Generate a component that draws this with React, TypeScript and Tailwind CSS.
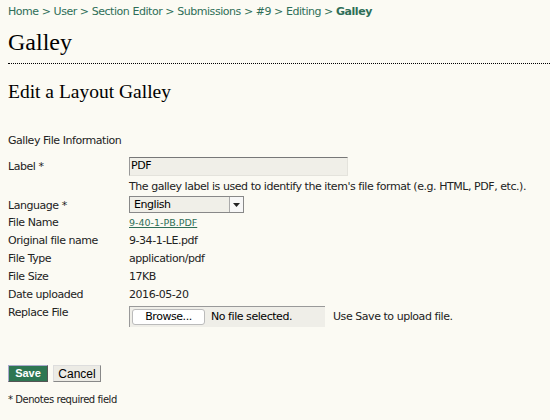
const Row = ({ label, children, pad = "py-[2px]", labelPad }: { label: string; children: React.ReactNode; pad?: string; labelPad?: string }) => (
  <tr>
    <td className={`w-[121px] align-top ${labelPad ?? pad}`}>{label}</td>
    <td className={`align-top ${pad}`}>{children}</td>
  </tr>
);

const App = () => {
  return (
    <div className="min-h-[420px] w-[550px] bg-[#fbfaf3] font-['DejaVu_Sans',sans-serif] text-[11px] tracking-[-0.45px] text-[#222] pl-2 pt-[5px] overflow-hidden">
      <div className="text-[#2e6e57] leading-[14px]">
        Home &gt; User &gt; Section Editor &gt; Submissions &gt; #9 &gt; Editing &gt; <span className="font-bold">Galley</span>
      </div>
      <h1 className="mt-[9px] font-['Liberation_Serif',serif] text-[24px] tracking-normal leading-[28px] text-black">Galley</h1>
      <div className="mt-[7px] border-b border-dotted border-black" />
      <h2 className="mt-[16px] font-['Liberation_Serif',serif] text-[19.5px] tracking-normal leading-[24px] text-black">Edit a Layout Galley</h2>
      <div className="mt-[30px] leading-[14px]">Galley File Information</div>
      <table className="mt-[6px] border-collapse leading-[14px]">
        <tbody>
          <Row label="Label *" pad="pt-[3px] pb-0" labelPad="pt-[6px] pb-0">
            <div className="w-[219px] h-[19px] bg-[#f0efe8] border border-[#e4e3dc] border-t-[#777] border-l-[#999] px-[1px] leading-[16px] text-[11px] text-black">
              PDF
            </div>
            <div className="mt-[4px] whitespace-nowrap">The galley label is used to identify the item's file format (e.g. HTML, PDF, etc.).</div>
          </Row>
          <Row label="Language *" pad="pt-[5px] pb-[1px]">
            <div className="relative -mt-[3px] w-[115px] h-[17px] bg-[#f0efe8] border border-[#888] flex items-center">
              <span className="pl-[4px] flex-1 text-black">English</span>
              <span className="w-[14px] h-full border-l border-[#aaa] flex items-center justify-center bg-[#f7f7f7]">
                <svg width="7" height="4" viewBox="0 0 7 4"><path d="M0 0h7L3.5 4z" fill="#222" /></svg>
              </span>
            </div>
          </Row>
          <Row label="File Name">
            <a className="text-[9.5px] tracking-normal text-[#2e6e57] underline">9-40-1-PB.PDF</a>
          </Row>
          <Row label="Original file name">9-34-1-LE.pdf</Row>
          <Row label="File Type">application/pdf</Row>
          <Row label="File Size">17KB</Row>
          <Row label="Date uploaded">2016-05-20</Row>
          <Row label="Replace File">
            <div className="flex items-center">
              <div className="w-[196px] h-[21px] bg-[#efeee8] border-l border-t border-[#999] flex items-center pl-[2px]">
                <span className="h-[16px] w-[73px] bg-white border border-[#bbb] rounded-[3px] flex items-center justify-center text-[11px] text-black">
                  Browse...
                </span>
                <span className="ml-[6px] text-black">No file selected.</span>
              </div>
              <span className="ml-[8px]">Use Save to upload file.</span>
            </div>
          </Row>
        </tbody>
      </table>
      <div className="mt-[36px] flex gap-[5px] tracking-normal">
        <span className="h-[17px] w-[40px] bg-[#2e7652] border border-[#aac] border-r-[#555] border-b-[#555] text-white font-bold flex items-center justify-center text-[11px] font-['Liberation_Sans',sans-serif]">
          Save
        </span>
        <span className="h-[17px] w-[48px] bg-[#ecebe5] border border-[#ddd] border-r-[#888] border-b-[#888] text-black flex items-center justify-center text-[12px] font-['Liberation_Sans',sans-serif]">
          Cancel
        </span>
      </div>
      <div className="mt-[10px] text-[10px]">* Denotes required field</div>
    </div>
  );
};

export default App;
